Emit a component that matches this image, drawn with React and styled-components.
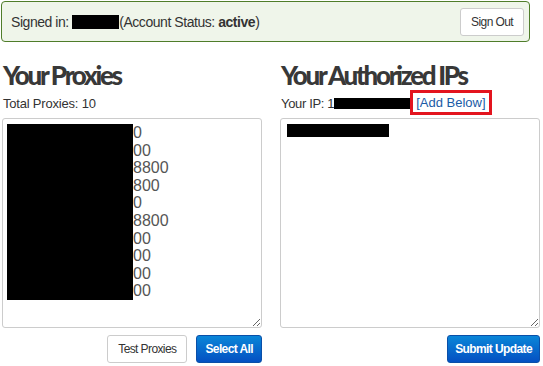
import React from "react";
import styled, { createGlobalStyle } from "styled-components";

const GlobalStyle = createGlobalStyle`
  body {
    margin: 0;
    background: #fff;
    font-family: "Liberation Sans", Arial, sans-serif;
    color: #333;
  }
`;

const Page = styled.div`
  width: 543px;
  padding: 1px 0 0 1px;
  box-sizing: border-box;
`;

const StatusBar = styled.div`
  display: flex;
  align-items: center;
  justify-content: space-between;
  width: 529px;
  height: 41px;
  box-sizing: border-box;
  padding: 0 5px 0 9px;
  background: #eff5ea;
  border: 1px solid #4f7d2a;
  border-radius: 4px;
  font-size: 14px;
  color: #333;
`;

const StatusText = styled.div`
  display: flex;
  align-items: center;
  letter-spacing: -0.45px;
`;

const Redacted = styled.span`
  display: inline-block;
  width: ${p => p.w}px;
  height: ${p => p.h || 14}px;
  background: #000;
  vertical-align: middle;
`;

const Button = styled.button`
  height: 28px;
  padding: 0 ${p => p.pad || 10}px;
  font-family: "Liberation Sans", Arial, sans-serif;
  font-size: 12px;
  letter-spacing: -0.6px;
  border-radius: 3px;
  cursor: pointer;
  color: ${p => (p.primary ? "#fff" : "#333")};
  font-weight: ${p => (p.primary ? "bold" : "normal")};
  background: ${p =>
    p.primary ? "linear-gradient(#0a86d8, #0450c2)" : "#fff"};
  border: 1px solid ${p => (p.primary ? "#0a4fa8" : "#ccc")};
`;

const Columns = styled.div`
  display: flex;
  gap: 18px;
  margin-top: 18px;
  padding-left: 1px;
`;

const Column = styled.div`
  width: 260px;
  display: flex;
  flex-direction: column;
`;

const Heading = styled.h2`
  margin: 0 0 0 1px;
  font-family: Lato, "Open Sans", sans-serif;
  font-weight: 900;
  font-size: 26px;
  letter-spacing: -2.3px;
  line-height: 30px;
  color: #383838;
`;

const SubLine = styled.div`
  display: flex;
  align-items: center;
  height: 22px;
  margin: 2px 0 4px 1px;
  font-size: 13px;
  letter-spacing: ${p => p.ls || -0.2}px;
  color: #333;
`;

const AddLink = styled.a`
  color: #1a5ba6;
  text-decoration: none;
  letter-spacing: 0;
  padding: 2px 3px;
  margin-top: -2px;
  border: 3px solid #e3141e;
`;

const ListBox = styled.div`
  height: 210px;
  box-sizing: border-box;
  border: 1px solid #ccc;
  border-radius: 3px;
  padding: 5px 4px;
  font-size: 16px;
  line-height: 17.6px;
  color: #555;
  resize: both;
  overflow: hidden;
`;

const Line = styled.div`
  display: flex;
  height: 17.6px;
`;

const LineMask = styled.span`
  display: inline-block;
  width: ${p => p.w}px;
  height: ${p => p.h || 17.6}px;
  margin-left: ${p => p.ml || 0}px;
  background: #000;
`;

const Actions = styled.div`
  display: flex;
  justify-content: flex-end;
  gap: 9px;
  margin-top: 7px;
`;

const tails = ["0", "00", "8800", "800", "0", "8800", "00", "00", "00", "00"];

export default function App() {
  return (
    <Page>
      <GlobalStyle />
      <StatusBar>
        <StatusText>
          Signed in:&nbsp;<Redacted w={47} />
          (Account Status:&nbsp;<b>active</b>)
        </StatusText>
        <Button pad={10}>Sign Out</Button>
      </StatusBar>
      <Columns>
        <Column>
          <Heading>Your Proxies</Heading>
          <SubLine>Total Proxies: 10</SubLine>
          <ListBox>
            {tails.map((t, i) => (
              <Line key={i}>
                <LineMask w={126} />
                {t}
              </Line>
            ))}
          </ListBox>
          <Actions>
            <Button pad={10}>Test Proxies</Button>
            <Button primary pad={8}>Select All</Button>
          </Actions>
        </Column>
        <Column>
          <Heading>Your Authorized IPs</Heading>
          <SubLine ls={-0.35}>
            Your IP: 1<Redacted w={76} h={11} />
            <AddLink href="#">[Add Below]</AddLink>
          </SubLine>
          <ListBox>
            <Line>
              <LineMask w={102} h={13} ml={2} />
            </Line>
          </ListBox>
          <Actions>
            <Button primary pad={7}>Submit Update</Button>
          </Actions>
        </Column>
      </Columns>
    </Page>
  );
}
